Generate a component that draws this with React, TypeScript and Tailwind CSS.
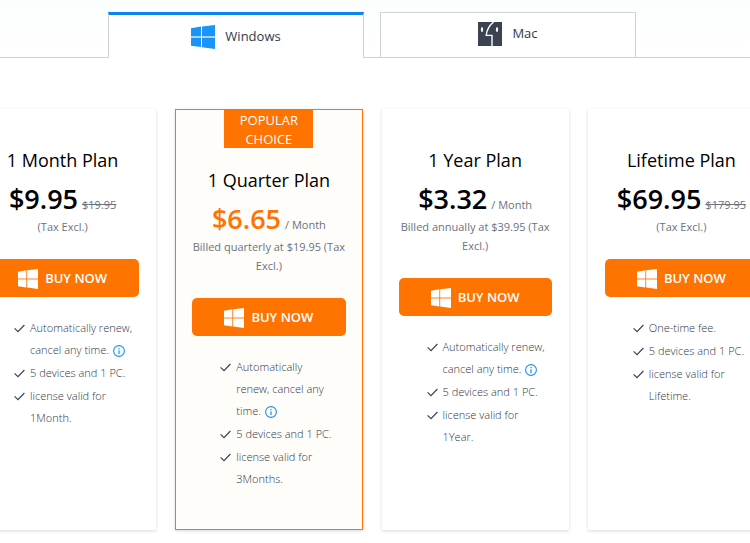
import React from "react";

type Plan = {
  name: string;
  price: string;
  was?: string;
  per?: string;
  note: string;
  popular?: boolean;
  features: { lines: string[]; info?: boolean }[];
};

const plans: Plan[] = [
  {
    name: "1 Month Plan",
    price: "$9.95",
    was: "$19.95",
    note: "(Tax Excl.)",
    features: [
      { lines: ["Automatically renew,", "cancel any time."], info: true },
      { lines: ["5 devices and 1 PC."] },
      { lines: ["license valid for", "1Month."] },
    ],
  },
  {
    name: "1 Quarter Plan",
    price: "$6.65",
    per: "/ Month",
    note: "Billed quarterly at $19.95 (Tax Excl.)",
    popular: true,
    features: [
      { lines: ["Automatically", "renew, cancel any", "time."], info: true },
      { lines: ["5 devices and 1 PC."] },
      { lines: ["license valid for", "3Months."] },
    ],
  },
  {
    name: "1 Year Plan",
    price: "$3.32",
    per: "/ Month",
    note: "Billed annually at $39.95 (Tax Excl.)",
    features: [
      { lines: ["Automatically renew,", "cancel any time."], info: true },
      { lines: ["5 devices and 1 PC."] },
      { lines: ["license valid for", "1Year."] },
    ],
  },
  {
    name: "Lifetime Plan",
    price: "$69.95",
    was: "$179.95",
    note: "(Tax Excl.)",
    features: [
      { lines: ["One-time fee."] },
      { lines: ["5 devices and 1 PC."] },
      { lines: ["license valid for", "Lifetime."] },
    ],
  },
];

function WindowsLogo({ className }: { className: string }) {
  return (
    <svg viewBox="0 0 24 24" className={className} fill="currentColor" aria-hidden="true">
      <path d="M0 3.3 10 1.6V11.3H0zM11 1.4 24 0V11.3H11zM0 12.7H10V22.1L0 20.7zM11 12.7H24V24L11 22.2z" />
      <path d="M0 11.3h10v1.4H0zM11 11.3h13v1.4H11z" opacity=".25" />
    </svg>
  );
}

function MacLogo() {
  return (
    <svg viewBox="0 0 24 24" className="size-6" aria-hidden="true">
      <path fill="#3b4252" d="M0 0h24v24H0z" />
      <path d="M15.6 0C11.2 3.4 8.9 8 8.2 13.4h5.8V24" fill="none" stroke="#fff" strokeWidth="1.4" />
      <ellipse cx="4" cy="7.5" rx="1.1" ry="2.5" fill="#fff" />
      <ellipse cx="19" cy="7.5" rx="1.1" ry="2.5" fill="#fff" />
    </svg>
  );
}

function Check() {
  return (
    <svg viewBox="0 0 11 22" className="h-[22px] w-[11px] shrink-0" fill="none" stroke="#3b4252" strokeWidth="1.2" aria-hidden="true">
      <path d="M.6 11.4 4 14.6 10.4 8" />
    </svg>
  );
}

function Info() {
  return (
    <svg viewBox="0 0 12 12" className="ml-1 inline-block size-3 align-middle" fill="none" stroke="#1a90f0" aria-label="More information">
      <circle cx="6" cy="6" r="5.4" strokeWidth="1.1" />
      <path d="M6 5.2v3.8M6 2.9v1.3" strokeWidth="1.2" />
    </svg>
  );
}

function PlanCard({ plan }: { plan: Plan }) {
  return (
    <section
      className={
        plan.popular
          ? "border border-[#ff7300] bg-[#fffdf9] px-4 text-center shadow-[0_1px_3px_rgba(0,0,0,0.16)]"
          : "bg-white px-[17px] pt-9 text-center shadow-[0_1px_3px_rgba(0,0,0,0.16)]"
      }
    >
      {plan.popular && (
        <p className="mx-auto mb-[17px] h-[38px] w-[89px] bg-[#ff7300] pt-px text-[13px] leading-[19px] text-white">
          POPULAR CHOICE
        </p>
      )}
      <h2 className="text-[18px] leading-[30px] whitespace-nowrap text-black">{plan.name}</h2>
      <p className="mt-1.5 flex h-9 items-baseline justify-center gap-1 leading-9 whitespace-nowrap">
        <strong className={plan.popular ? "text-[27px] font-semibold text-[#ff7300]" : "text-[27px] font-semibold text-black"}>
          {plan.price}
        </strong>
        {plan.was && <s className="text-[11px] text-[#6b7280]">{plan.was}</s>}
        {plan.per && <span className="text-[11px] text-[#6b7280]">{plan.per}</span>}
      </p>
      <p className="text-[11px] leading-[19px] text-[#6b7280]">{plan.note}</p>
      <button
        type="button"
        className="mt-[23px] flex h-[38px] w-full items-center justify-center gap-[7px] rounded-[5px] bg-[#ff7300] pt-px text-[13px] font-semibold text-white"
      >
        <WindowsLogo className="size-5" />
        BUY NOW
      </button>
      <ul className="mt-5 space-y-px pl-7 text-left text-[11px] leading-[22px] font-light text-[#2f3747]">
        {plan.features.map((f) => (
          <li key={f.lines[0]} className="flex gap-[5px]">
            <Check />
            <div className="whitespace-nowrap">
              {f.lines.map((line, i) => (
                <div key={line} className="h-[22px]">
                  {line}
                  {f.info && i === f.lines.length - 1 && <Info />}
                </div>
              ))}
            </div>
          </li>
        ))}
      </ul>
    </section>
  );
}

export default function App() {
  return (
    <main className="min-h-screen overflow-hidden bg-white font-['Open_Sans','Noto_Sans',sans-serif]">
      <div className="-ml-1.5">
        <div role="tablist" className="grid grid-cols-[1fr_256px_16px_256px_1fr] bg-linear-to-b from-[#fcfefe] to-white pt-3 text-[13px] font-medium text-[#2f3a50]">
          <div className="border-b border-[#d0d2da]" />
          <button role="tab" aria-selected="true" type="button" className="flex h-[46px] items-center justify-center gap-2.5 border-x border-t-[3px] border-x-[#d0d2da] border-t-[#0a85f0] bg-white">
            <WindowsLogo className="size-6 text-[#1a94f8]" />
            Windows
          </button>
          <div className="border-b border-[#d0d2da]" />
          <button role="tab" aria-selected="false" type="button" className="flex h-[46px] items-center justify-center gap-2.5 border border-[#d0d2da] bg-white pb-0.5">
            <MacLogo />
            Mac
          </button>
          <div className="border-b border-[#d0d2da]" />
        </div>
        <div className="-mx-[25px] mt-[51px] grid min-h-[421px] grid-cols-4 gap-x-[19px]">
          {plans.map((p) => (
            <PlanCard key={p.name} plan={p} />
          ))}
        </div>
      </div>
    </main>
  );
}
